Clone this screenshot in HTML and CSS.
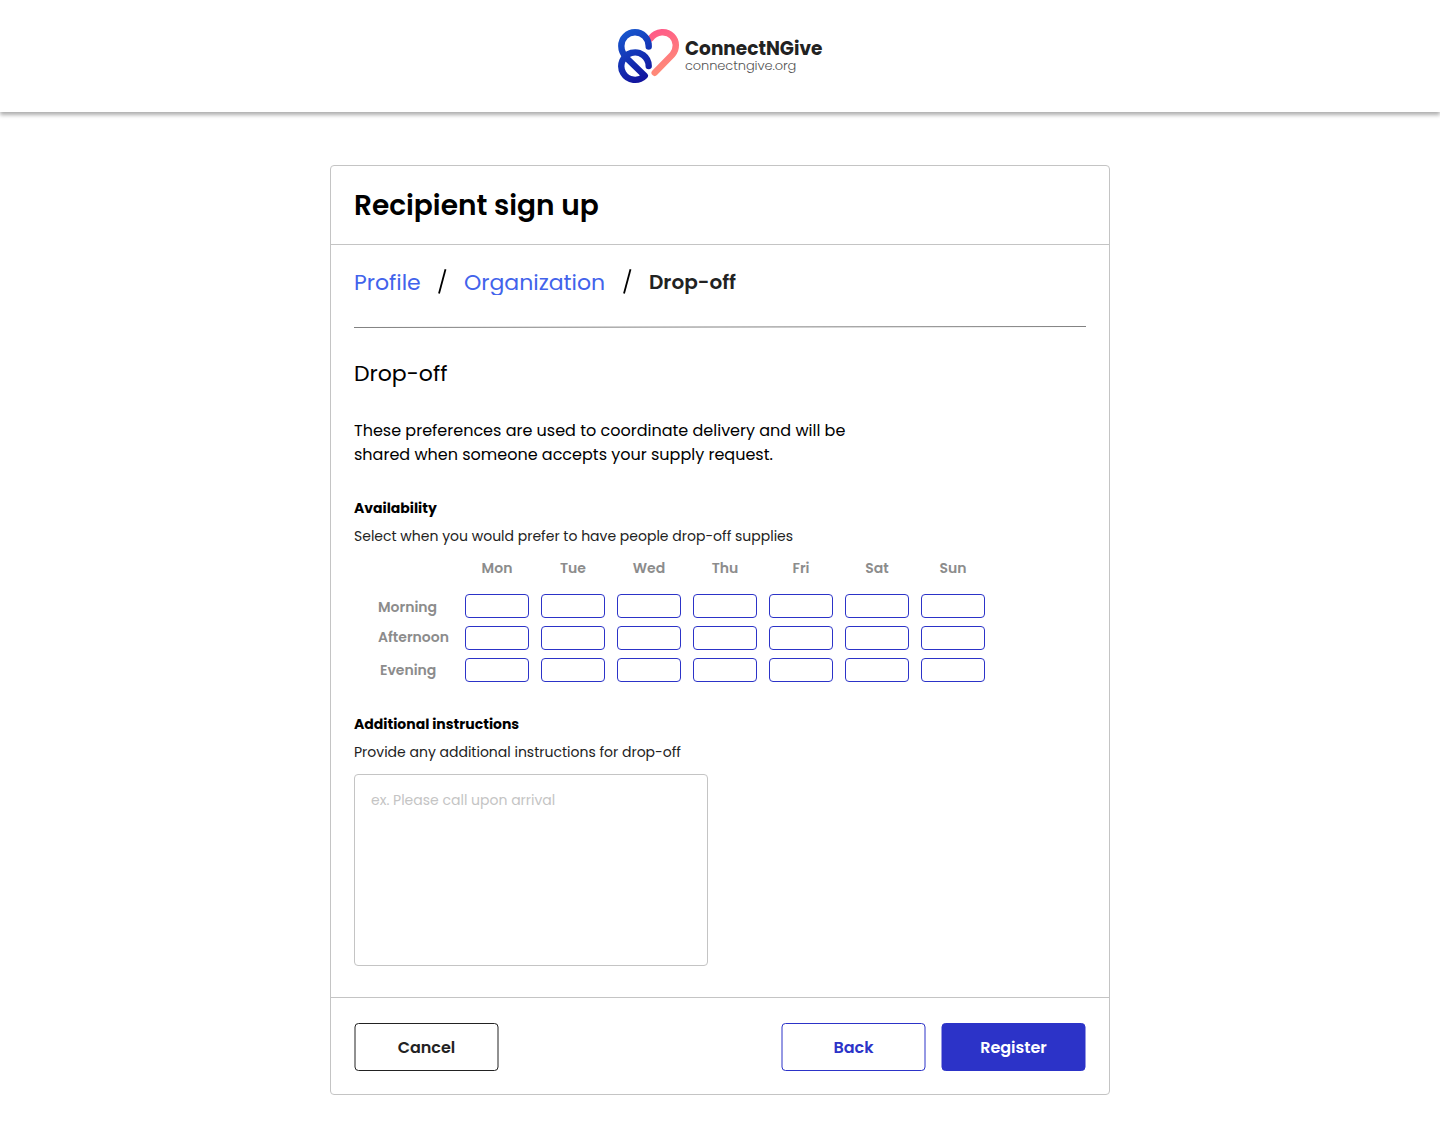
FILE: index.html
```html
<!DOCTYPE html>
<html lang="en">
<head>
<meta charset="utf-8">
<title>Recipient sign up – ConnectNGive</title>
<link rel="stylesheet" href="styles.css">
</head>
<body>
<header class="site-header">
  <div class="brand">
    <svg class="brand-mark" width="64" height="56" viewBox="7 8 64 56" fill="none" stroke-width="6.4" stroke-linecap="round" stroke-linejoin="round">
      <defs>
        <linearGradient id="blue" x1="10" y1="12" x2="36" y2="60" gradientUnits="userSpaceOnUse"><stop stop-color="#1758cf"/><stop offset="1" stop-color="#12129c"/></linearGradient>
        <linearGradient id="pink" x1="42" y1="14" x2="58" y2="48" gradientUnits="userSpaceOnUse"><stop stop-color="#ff5c88"/><stop offset="1" stop-color="#ff8a78"/></linearGradient>
      </defs>
      <path stroke="url(#pink)" d="M40.500 18.500C46.500 10.500 57 10.800 62 16C67 21 67 29 62.500 34.500L44.700 52.800"/>
      <path stroke="url(#blue)" d="M38.700 26.500V26A13.700 13.700 0 0 0 11.300 26C11.300 31 13.300 34.500 16.500 38L34.800 55.700A13.700 13.700 0 1 1 38.700 46"/>
    </svg>
    <div class="brand-text">
      <span class="brand-name">ConnectNGive</span>
      <span class="brand-url">connectngive.org</span>
    </div>
  </div>
</header>
<main class="card">
  <h1 class="card-title">Recipient sign up</h1>
  <section class="card-body">
    <nav class="steps">
      <a class="step step-profile">Profile</a>
      <svg class="slash" width="10" height="26" viewBox="0 0 10 26"><path d="M1 24.500 7.500 .300" stroke="#000" stroke-width="1.800"/></svg>
      <a class="step step-org">Organization</a>
      <svg class="slash" width="10" height="26" viewBox="0 0 10 26"><path d="M1 24.500 7.500 .300" stroke="#000" stroke-width="1.800"/></svg>
      <span class="step-current">Drop-off</span>
    </nav>
    <svg class="rule" width="732" height="3" viewBox="0 0 732 3"><path d="M0 1.500 732 .500" stroke="#828282"/></svg>
    <h2 class="section-title">Drop-off</h2>
    <p class="intro">These preferences are used to coordinate delivery and will be<br>shared when someone accepts your supply request.</p>
    <h3 class="label label-avail">Availability</h3>
    <p class="hint">Select when you would prefer to have people drop-off supplies</p>
    <div class="days"><span>Mon</span><span>Tue</span><span>Wed</span><span>Thu</span><span>Fri</span><span>Sat</span><span>Sun</span></div>
    <div class="slots">
      <span class="time time-morning">Morning</span><i class="slot"></i><i class="slot"></i><i class="slot"></i><i class="slot"></i><i class="slot"></i><i class="slot"></i><i class="slot"></i>
      <span class="time time-afternoon">Afternoon</span><i class="slot"></i><i class="slot"></i><i class="slot"></i><i class="slot"></i><i class="slot"></i><i class="slot"></i><i class="slot"></i>
      <span class="time time-evening">Evening</span><i class="slot"></i><i class="slot"></i><i class="slot"></i><i class="slot"></i><i class="slot"></i><i class="slot"></i><i class="slot"></i>
    </div>
    <h3 class="label label-extra">Additional instructions</h3>
    <p class="hint">Provide any additional instructions for drop-off</p>
    <div class="textbox">ex. Please call upon arrival</div>
  </section>
  <footer class="actions">
    <button class="btn btn-cancel">Cancel</button>
    <button class="btn btn-back">Back</button>
    <button class="btn btn-register">Register</button>
  </footer>
</main>
</body>
</html>
```
FILE: styles.css
```css
* { box-sizing: border-box; }
body { margin: 0; background: #fff; color: #000; font-family: Poppins, Inter, sans-serif; }
h1, h2, h3, p { margin: 0; }
span, a { white-space: nowrap; }

.site-header { height: 112px; display: flex; justify-content: center; box-shadow: 0 3px 4px rgba(0, 0, 0, .32); }
.brand { display: flex; width: 206px; padding-top: 28px; gap: 4px; }
.brand-mark { flex: none; }
.brand-text { display: flex; flex-direction: column; padding-top: 9px; color: #222; }
.brand-name { font-size: 18.5px; line-height: 22px; font-weight: 700; transform: translateY(.5px); }
.brand-url { font-size: 13px; line-height: 14px; font-weight: 300; letter-spacing: -.1px; color: #555; }

.card { width: 780px; height: 930px; margin: 53px auto 0; border: 1px solid #c4c4c4; border-radius: 4px; display: flex; flex-direction: column; }
.card-title { height: 79px; padding-left: 23px; border-bottom: 1px solid #c4c4c4; font-size: 28px; line-height: 79px; font-weight: 600; }
.card-body { flex: 1; padding: 23px 23px 0; display: flex; flex-direction: column; align-items: flex-start; }
.steps { display: flex; height: 28px; line-height: 28px; }
.step { color: #4263eb; font-size: 22px; line-height: 30px; overflow: hidden; height: 27px; }
.step-profile { width: 84px; }
.step-org { width: 159px; margin-left: 16px; }
.step-current { margin-left: 16px; font-size: 20px; font-weight: 600; color: #222; }
.slash { margin-top: 1px; flex: none; }
.rule { margin-top: 30px; display: block; }
.section-title { margin-top: 29px; font-size: 22px; line-height: 32px; font-weight: 400; }
.intro { margin-top: 29px; font-size: 16px; line-height: 24px; }
.label { font-size: 14px; line-height: 20px; font-weight: 700; }
.label-avail { margin-top: 31px; }
.label-extra { margin-top: 32px; }
.hint { margin-top: 8px; font-size: 14px; line-height: 20px; color: #222; }
.days { display: grid; grid-template-columns: repeat(7, 64px); column-gap: 12px; margin: 12px 0 0 111px; font-size: 14px; line-height: 20px; font-weight: 600; color: #8c8c8c; text-align: center; }
.slots { display: grid; grid-template-columns: 75px repeat(7, 64px); grid-auto-rows: 24px; column-gap: 12px; row-gap: 8px; margin: 16px 0 0 24px; }
.time { font-size: 14px; line-height: 24px; font-weight: 600; color: #8c8c8c; transform: translateY(-.3px); }
.time-morning { margin-top: 1px; }
.time-afternoon { margin-top: -1px; }
.time-evening { padding-left: 2px; }
.slot { height: 24px; border: 1px solid #2c33c8; border-radius: 4px; }
.textbox { width: 354px; height: 192px; margin-top: 12px; padding: 15px 16px; border: 1px solid #c4c4c4; border-radius: 4px; font-size: 14px; line-height: 20px; color: #c4c4c4; }
.actions { height: 98px; flex: none; display: flex; padding: 25px 24px 0 23px; border-top: 1px solid #c4c4c4; margin-bottom: -1px; }
.btn { width: 144px; height: 48px; padding: 0; border: 1px solid #222; border-radius: 4px; background: #fff; color: #222; font: inherit; font-size: 16px; font-weight: 600; transform: translateX(.5px); }
.btn-back { margin-left: auto; border-color: #2c33c8; color: #2c33c8; }
.btn-register { margin-left: 16px; border-color: #2c33c8; background: #2c33c8; color: #fff; }
```
